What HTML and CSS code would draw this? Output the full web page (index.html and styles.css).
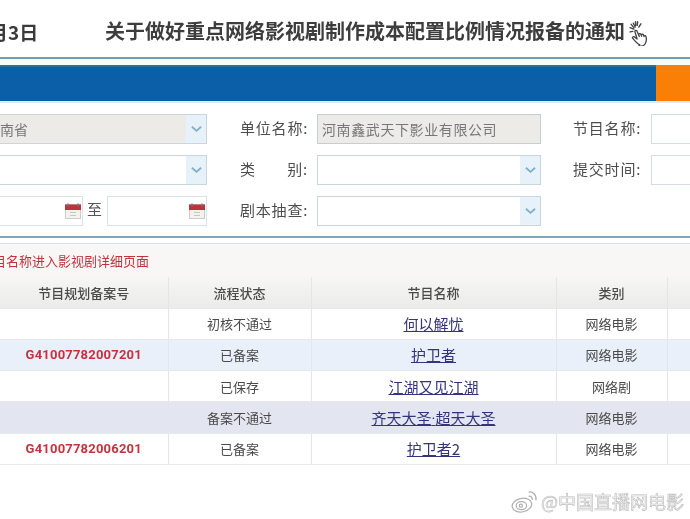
FILE: index.html
```html
<!DOCTYPE html>
<html lang="zh-CN">
<head>
<meta charset="utf-8">
<title>通知</title>
<link rel="stylesheet" href="styles.css">
</head>
<body>
<div class="page">
  <header class="head">
    <span class="date">月3日</span>
    <h1 class="title">关于做好重点网络影视剧制作成本配置比例情况报备的通知</h1>
    <svg class="hand" viewBox="0 0 24 24" fill="none" stroke="#444" stroke-width="1.200" stroke-linecap="round" stroke-linejoin="round">
      <path d="M10 23c-2-1-4.500-3.500-6.500-6-.8-1 .5-2.200 1.600-1.400L7.500 17.500 5.500 11c-.4-1.400 1.500-2 2-.6l2 4.800-.4-1.400c-.3-1.300 1.500-1.700 1.900-.4l.7 1.700-.2-.9c-.2-1.200 1.500-1.500 1.900-.3l.5 1.400c-.1-1.100 1.400-1.300 1.700-.2.700 2.200.5 4.500-.4 6.300-.6 1.200-1.500 2-2.500 2.400-1.300.5-2.900.6-3.700.2z"/>
      <path d="M4 3l1.800 3.500M1 7l3.500 1.500M8 1.500l-.4 3.500M11 3.500L9 6.500M1 11l2.500-.5M2 4l2.500 3M6 1.500l.2 3.500" stroke-width="1.300"/>
    </svg>
  </header>

  <div class="bar-wrap">
    <div class="bar"><div class="bar-tab"></div></div>
  </div>

  <form class="filters">
    <div class="select disabled"><span class="cut">河南省</span><span class="arrow"><svg viewBox="0 0 12 8" class="chev"><path d="M1 1.500l5 4.500 5-4.500" /></svg></span></div>
    <label class="label">单位名称:</label>
    <div class="field disabled">河南鑫武天下影业有限公司</div>
    <label class="label narrow">节目名称:</label>
    <div class="field bleed"></div>

    <div class="select"><span class="arrow"><svg viewBox="0 0 12 8" class="chev"><path d="M1 1.500l5 4.500 5-4.500" /></svg></span></div>
    <label class="label"><span class="spread"><span>类</span><span>别:</span></span></label>
    <div class="select"><span class="arrow"><svg viewBox="0 0 12 8" class="chev"><path d="M1 1.500l5 4.500 5-4.500" /></svg></span></div>
    <label class="label narrow">提交时间:</label>
    <div class="field bleed"></div>

    <div class="dates">
      <div class="date-field first">
        <svg class="cal" viewBox="0 0 16 16"><rect x="0.500" y="1" width="15" height="14" fill="#f4f1ee" stroke="#ccc"/><rect x="0" y="1" width="16" height="5.500" fill="#b9343c"/><path d="M3 0v3M13 0v3" stroke="#777" stroke-width="1.500"/><path d="M5 9h6M5 12h6" stroke="#c5c5c5"/></svg>
      </div>
      <span class="to">至</span>
      <div class="date-field second">
        <svg class="cal" viewBox="0 0 16 16"><rect x="0.500" y="1" width="15" height="14" fill="#f4f1ee" stroke="#ccc"/><rect x="0" y="1" width="16" height="5.500" fill="#b9343c"/><path d="M3 0v3M13 0v3" stroke="#777" stroke-width="1.500"/><path d="M5 9h6M5 12h6" stroke="#c5c5c5"/></svg>
      </div>
    </div>
    <label class="label">剧本抽查:</label>
    <div class="select"><span class="arrow"><svg viewBox="0 0 12 8" class="chev"><path d="M1 1.500l5 4.500 5-4.500" /></svg></span></div>
  </form>

  <section class="results">
    <p class="hint">目名称进入影视剧详细页面</p>
    <table class="grid">
      <colgroup>
        <col class="c1"><col class="c2"><col class="c3"><col class="c4"><col class="c5">
      </colgroup>
      <thead>
        <tr><th>节目规划备案号</th><th>流程状态</th><th>节目名称</th><th>类别</th><th></th></tr>
      </thead>
      <tbody>
        <tr><td></td><td>初核不通过</td><td><a class="link" href="#">何以解忧</a></td><td>网络电影</td><td></td></tr>
        <tr class="blue"><td class="code">G41007782007201</td><td>已备案</td><td><a class="link" href="#">护卫者</a></td><td>网络电影</td><td></td></tr>
        <tr><td></td><td>已保存</td><td><a class="link" href="#">江湖又见江湖</a></td><td>网络剧</td><td></td></tr>
        <tr class="slate"><td></td><td>备案不通过</td><td><a class="link" href="#">齐天大圣<span class="dot">·</span>超天大圣</a></td><td>网络电影</td><td></td></tr>
        <tr><td class="code">G41007782006201</td><td>已备案</td><td><a class="link" href="#">护卫者2</a></td><td>网络电影</td><td></td></tr>
      </tbody>
    </table>
  </section>

  <div class="mark">
    <svg class="weibo" viewBox="0 0 26 22" fill="none" stroke="#b0b0b0" stroke-width="1.200">
      <ellipse cx="10.500" cy="14.500" rx="9.500" ry="6.500" transform="rotate(-12 10.500 14.500)"/>
      <ellipse cx="10" cy="15" rx="5" ry="3.800"/>
      <circle cx="9.500" cy="15" r="1.500"/>
      <path d="M17 2c4-1 8 3 7 8M17 6c2-.5 4 1.200 3.500 3.500"/>
    </svg>
    <span class="mark-text">@中国直播网电影</span>
  </div>
</div>
</body>
</html>
```
FILE: styles.css
```css
* { box-sizing: border-box; }
html, body { margin: 0; padding: 0; background: #fff; }
body { font-family: "Noto Sans CJK SC", "Noto Sans", sans-serif; color: #444; }

.page {
  position: relative;
  width: 690px;
  height: 519px;
  overflow: hidden;
  filter: blur(0.6px);
}

.head {
  display: flex;
  align-items: center;
  height: 57px;
  padding-top: 5px;
}
.date {
  margin-left: -11px;
  width: 116px;
  flex: none;
  font-size: 19px;
  font-weight: 700;
  color: #3a3a3a;
}
.title {
  margin: 0;
  flex: none;
  font-size: 20px;
  line-height: 28px;
  font-weight: 700;
  color: #3d3d3d;
  white-space: nowrap;
}
.hand { width: 26px; height: 26px; margin-left: 4px; margin-top: 3px; flex: none; }

.bar-wrap {
  border-top: 2px solid #6f9fb0;
  padding: 6px 0 0;
  background: #f4fbfd;
  border-bottom: 2px solid #d9edf5;
}
.bar {
  height: 36px;
  background: #0b5ea8;
  border-top: 2px solid #2a6d9f;
  display: flex;
  justify-content: flex-end;
}
.bar-tab { width: 34px; margin-top: -2px; background: #f97f06; }

.filters {
  display: grid;
  grid-template-columns: 207px 110px 224px 110px 39px;
  grid-auto-rows: 30px;
  row-gap: 11px;
  margin-top: 11px;
  height: 121px;
}
.label {
  display: flex;
  align-items: center;
  font-size: 15px;
  line-height: 28px;
  padding-bottom: 2px;
  letter-spacing: 0.8px;
  color: #4d4d4d;
  padding-left: 33px;
  white-space: nowrap;
}
.label.narrow { padding-left: 32px; }
.spread { display: flex; justify-content: space-between; width: 68px; }

.select, .field {
  position: relative;
  display: flex;
  align-items: center;
  height: 30px;
  background: #fff;
  border: 1.500px solid #c9d6de;
  font-size: 14px;
  color: #666;
  overflow: hidden;
}
.select { border-left-width: 0; }
.filters .select:nth-child(8), .filters .select:last-child { border-left-width: 1.500px; }
.field { padding-left: 4px; white-space: nowrap; }
.field.bleed { border-right: 0; border-color: #d5dde2; }
.disabled { background: #ecebe7; color: #777; }
.field.disabled { border-color: #c5ced2; letter-spacing: 0.6px; }
.cut { margin-left: -14px; }
.arrow {
  position: absolute;
  right: 0;
  top: 0;
  bottom: 0;
  width: 20px;
  display: flex;
  align-items: center;
  justify-content: center;
  background: #e6f1fa;
}
.chev { width: 11px; height: 8px; fill: none; stroke: #7fb0c8; stroke-width: 2; }

.dates { display: flex; align-items: center; height: 30px; }
.date-field {
  display: flex;
  align-items: center;
  justify-content: flex-end;
  height: 30px;
  padding-right: 1px;
  background: #fff;
  border: 1px solid #dbe3e8;
}
.date-field.first { width: 83px; border-left: 0; }
.date-field.second { width: 100px; }
.to { width: 24px; padding-left: 4px; font-size: 15px; line-height: 26px; padding-bottom: 4px; color: #555; }
.cal { width: 16px; height: 17px; }

.results {
  margin-top: 1px;
  border-top: 2px solid #7ba7b8;
}
.hint {
  margin: 5px 0 0;
  height: 34px;
  text-indent: -7px;
  border-top: 1px solid #d5e3ec;
  background: #f8f7f5;
  font-size: 13px;
  line-height: 34px;
  color: #c0333d;
  white-space: nowrap;
}
.grid {
  width: 690px;
  table-layout: fixed;
  border-collapse: collapse;
  font-size: 13px;
  color: #4a4a4a;
}
.c1 { width: 168px; }
.c2 { width: 143px; }
.c3 { width: 245px; }
.c4 { width: 111px; }
.c5 { width: 23px; }
.grid th, .grid td {
  text-align: center;
  padding: 0;
  border-left: 1px solid #e2e5ea;
  border-bottom: 1px solid #e6e8ec;
  white-space: nowrap;
}
.grid th:first-child, .grid td:first-child { border-left: 0; }
.grid th {
  height: 31px;
  font-weight: 500;
  background: linear-gradient(#f6f6f4, #ebebe9);
}
.grid td { height: 31.250px; }
.blue td { background: #e9f0fa; }
.slate td { background: #e3e6f0; }
.code {
  font-family: Roboto, "Liberation Sans", sans-serif;
  font-weight: 700;
  font-size: 13px;
  letter-spacing: 0.2px;
  color: #c8323f;
}
.link { font-size: 15px; color: #33337f; text-decoration: underline; }
.dot { font-family: Roboto, sans-serif; }

.mark {
  position: absolute;
  right: 6px;
  bottom: 5px;
  display: flex;
  align-items: center;
  gap: 3px;
}
.weibo { width: 27px; height: 23px; }
.mark-text {
  font-size: 18px;
  letter-spacing: 0;
  color: #f6f6f6;
  -webkit-text-stroke: 0.6px #bcbcbc;
  white-space: nowrap;
}
```
